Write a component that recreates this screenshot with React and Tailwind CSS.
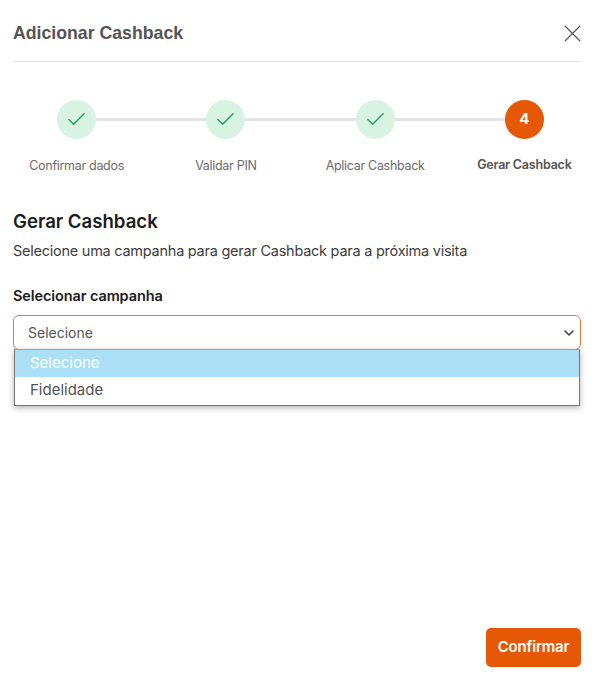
import React from 'react';
import { Check, X, ChevronDown } from 'lucide-react';

const steps = ['Confirmar dados', 'Validar PIN', 'Aplicar Cashback', 'Gerar Cashback'];

const Step = ({ label, index }) => {
  const isActive = index === steps.length - 1;

  return (
    <div className="relative flex flex-col items-center">
      {/* Connector to next step */}
      {!isActive && <div className="absolute left-1/2 top-[18px] h-[3px] w-full bg-[#e5e5e5]" />}
      <div
        className={`relative flex h-[39px] w-[39px] items-center justify-center rounded-full ${
          isActive ? 'bg-[#e65805] text-white' : 'bg-[#d9f3e2] text-[#1fa35c]'
        }`}
      >
        {isActive ? (
          <span className="text-[15px] font-bold">4</span>
        ) : (
          <Check size={23} strokeWidth={1.5} />
        )}
      </div>
      <span
        className={`mt-[17px] text-[12.5px] leading-5 ${
          isActive
            ? 'font-semibold tracking-[-0.2px] text-[#545454] -translate-y-[1px]'
            : 'tracking-[-0.3px] text-[#6b6b6b]'
        }`}
      >
        {label}
      </span>
    </div>
  );
};

export default function App() {
  return (
    <div className="flex h-[688px] w-[600px] flex-col overflow-hidden bg-white font-['Inter',sans-serif]">
      {/* Header */}
      <div className="mx-[13px] flex h-[62px] w-[568px] items-center justify-between border-b border-[#e5e5e5] pt-[5px]">
        <h1 className="font-['Liberation_Sans',sans-serif] text-[17.7px] font-bold text-[#545454]">
          Adicionar Cashback
        </h1>
        <X size={29} strokeWidth={1} className="mr-[-6px] text-[#545454]" />
      </div>

      {/* Stepper */}
      <div className="ml-[2px] mt-[38px] grid w-[597px] grid-cols-4">
        {steps.map((label, index) => (
          <Step key={label} label={label} index={index} />
        ))}
      </div>

      {/* Content */}
      <div className="mx-[13px] mt-[33px] flex w-[568px] flex-1 flex-col">
        <h2 className="text-[18.6px] font-semibold leading-6 text-[#1c1c1c]">Gerar Cashback</h2>
        <p className="mt-[8px] text-[14.5px] leading-5 tracking-[-0.25px] text-[#3d3d3d]">
          Selecione uma campanha para gerar Cashback para a próxima visita
        </p>
        <label className="mt-[25px] text-[14.5px] font-semibold leading-5 tracking-[-0.1px] text-[#1c1c1c]">
          Selecionar campanha
        </label>

        {/* Select */}
        <div className="relative mt-[9px]">
          <div className="flex h-[35px] items-center justify-between rounded-[6px] border border-[#ef7a36] pl-[14px] pr-[3px] text-[14px] text-[#545454]">
            <span>Selecione</span>
            <ChevronDown size={16} strokeWidth={2.25} className="text-[#3d3d3d]" />
          </div>
          <div className="absolute left-[1px] top-[34px] w-[566px] border border-[#767676] border-t-[#a0a0a0] bg-white text-[15px] leading-[26px] text-[#545454] shadow-[0_2px_6px_rgba(0,0,0,0.3)]">
            <div className="bg-[#aadff6] pb-[1px] pl-[15px] text-white">Selecione</div>
            <div className="h-[28px] pl-[15px]">Fidelidade</div>
          </div>
        </div>

        {/* Footer */}
        <div className="mb-[21px] mt-auto flex justify-end">
          <button className="h-[39px] w-[95px] rounded-[5px] bg-[#e65805] text-[15px] font-semibold tracking-[-0.2px] text-white">
            Confirmar
          </button>
        </div>
      </div>
    </div>
  );
}
